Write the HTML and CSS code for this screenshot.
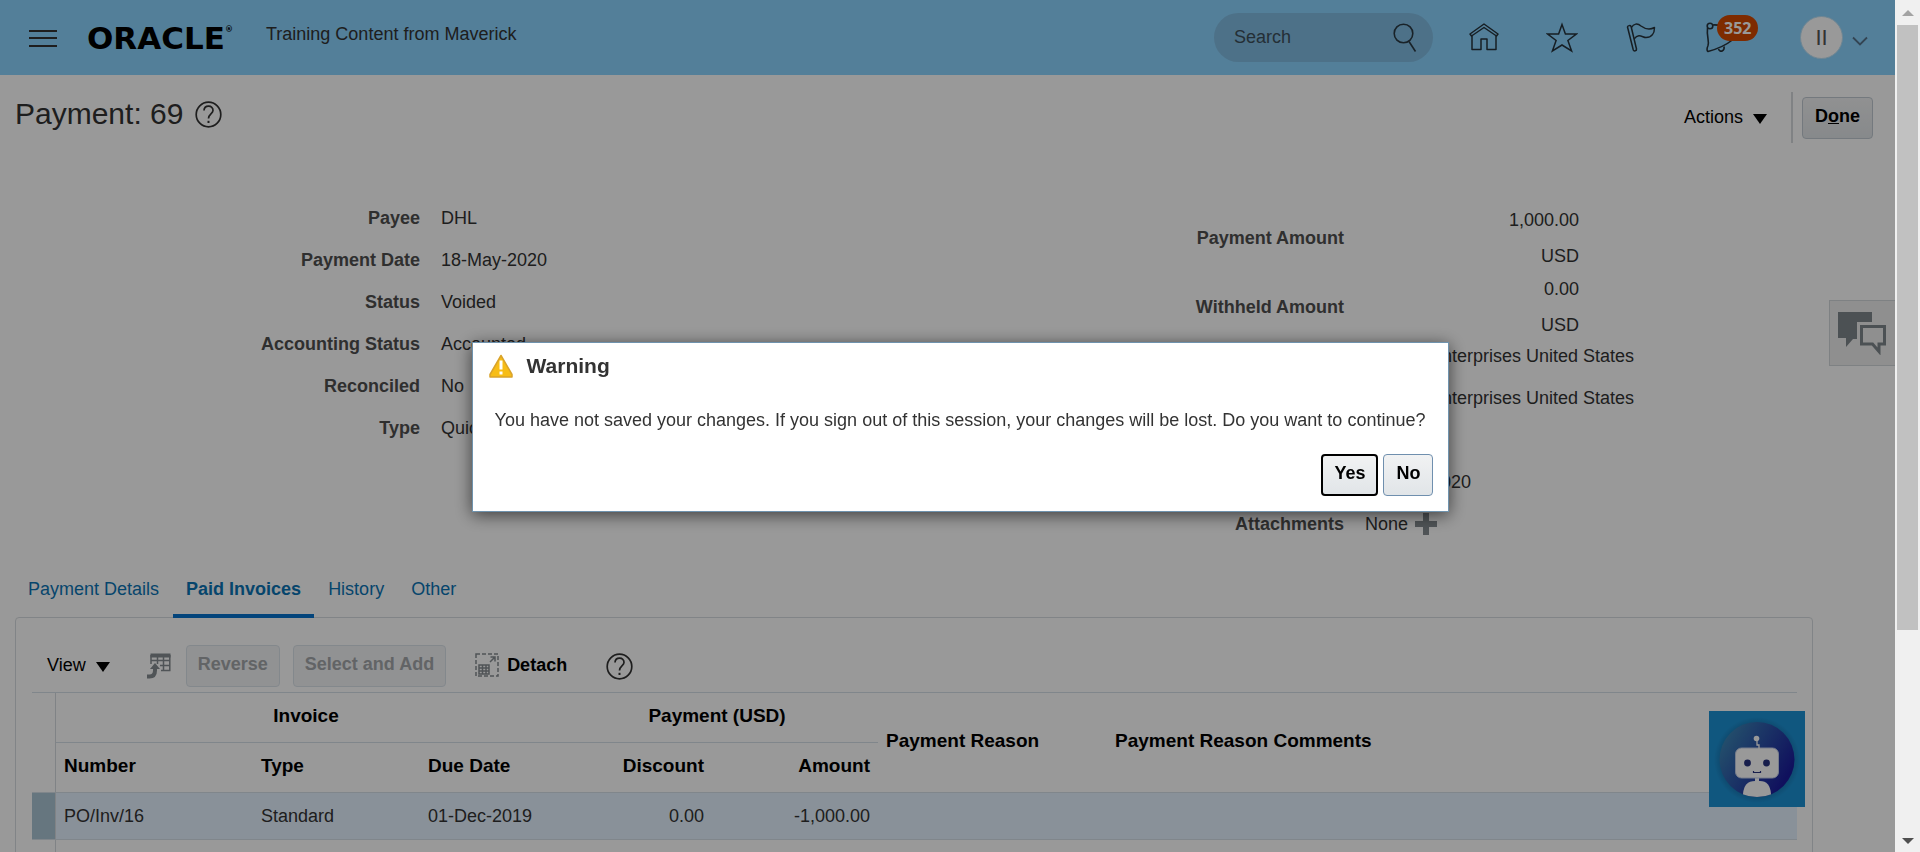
FILE: index.html
```html
<!DOCTYPE html>
<html lang="en">
<head>
<meta charset="utf-8">
<title>Payment: 69</title>
<link rel="stylesheet" href="styles.css">
</head>
<body>
<div class="page">
  <header class="topbar">
    <button class="icon-button" aria-label="Navigator">
      <svg width="28" height="20" viewBox="0 0 28 20" fill="none" stroke="#333" stroke-width="2"><path d="M0 3h28M0 10h28M0 18h28"/></svg>
    </button>
    <a class="logo" href="#">ORACLE<sup class="logo-mark">®</sup></a>
    <span class="tagline">Training Content from Maverick</span>
    <div class="topbar-tools">
      <label class="search">
        <input class="search-input" type="text" placeholder="Search" aria-label="Search">
        <svg width="24" height="30" viewBox="0 0 24 30" fill="none" stroke="#2b3a44" stroke-width="1.6"><circle cx="10.500" cy="10.500" r="9.300"/><path d="M16 18.500L22.500 28.500"/></svg>
      </label>
      <a class="tool tool-home" href="#" aria-label="Home">
        <svg width="30" height="30" viewBox="0 0 30 30" fill="none" stroke="#26333c" stroke-width="1.5" stroke-linejoin="round"><path d="M1 11L15 1l14 10-1.500 2L15 4.500 2.500 13z"/><path d="M3 13V26.500h9V16h6v10.500h9V13"/></svg>
      </a>
      <a class="tool tool-star" href="#" aria-label="Favorites">
        <svg width="32" height="32" viewBox="0 0 32 32" fill="none" stroke="#26333c" stroke-width="1.5"><path d="M16 2.500l3.400 9.500h11l-8.500 6.500 3.700 10.500L16 23l-9.600 6 3.700-10.500L1.600 12h11z"/></svg>
      </a>
      <a class="tool tool-flag" href="#" aria-label="Watchlist">
        <svg width="30" height="32" viewBox="0 0 30 32" fill="none" stroke="#26333c" stroke-width="1.5" stroke-linejoin="round"><path d="M1.500 5c0-1.500 3-2 3.600-.500L10.500 27c.3 1.800-2.500 2.600-3.200 1z"/><path d="M5.500 5.500c2-4 6-4.500 9.500-1.500 4 3 8 4.500 13.500 1.500 0 6-3 10-8.500 10-3.500 0-7-4.500-11.800 1.200"/></svg>
      </a>
      <a class="tool tool-bell" href="#" aria-label="Notifications, 352 unread">
        <svg width="36" height="34" viewBox="0 0 36 34" fill="none" stroke="#26333c" stroke-width="1.6"><circle cx="5" cy="5" r="2.800"/><path d="M7.500 4c11-1 19 6 20.500 14.500C20 25 14 27.500 3 30.500c-1.500-1-1-3.500 0-6 1.500-4.500-1.500-9-.500-17.500"/><path d="M13.500 28c1.500 4 6.500 2 5.500-2.500"/></svg>
        <span class="badge">352</span>
      </a>
      <button class="user" aria-label="Settings and actions">
        <span class="avatar">II</span>
        <svg class="chevron" width="16" height="10" viewBox="0 0 16 10" fill="none" stroke="#55728a" stroke-width="1.8"><path d="M1 1.500l7 7 7-7"/></svg>
      </button>
    </div>
  </header>

  <div class="title-row">
    <h1 class="title">Payment: 69</h1>
    <button class="icon-button" aria-label="Help">
      <svg width="27" height="27" viewBox="0 0 27 27" fill="none" stroke="#333" stroke-width="1.700"><circle cx="13.500" cy="13.500" r="12.300"/><path d="M9 9.500c.3-6 9.300-5.500 9 0-.2 3.500-4.500 3.500-4.500 8"/><path d="M13.500 19.800v2.200" stroke-width="2"/></svg>
    </button>
    <div class="title-actions">
      <button class="menu-button">Actions <span class="caret"></span></button>
      <span class="divider"></span>
      <button class="button">D<u>o</u>ne</button>
    </div>
  </div>

  <section class="summary">
    <dl class="fields">
      <dt>Payee</dt><dd>DHL</dd>
      <dt>Payment Date</dt><dd>18-May-2020</dd>
      <dt>Status</dt><dd>Voided</dd>
      <dt>Accounting Status</dt><dd>Accounted</dd>
      <dt>Reconciled</dt><dd>No</dd>
      <dt>Type</dt><dd>Quick</dd>
    </dl>
    <div class="right-fields">
      <dl class="fields amounts">
        <dt>Payment Amount</dt><dd><span>1,000.00</span><span>USD</span></dd>
        <dt>Withheld Amount</dt><dd><span>0.00</span><span>USD</span></dd>
      </dl>
      <dl class="fields">
        <dt></dt><dd class="company">Enterprises United States</dd>
        <dt></dt><dd class="company">Enterprises United States</dd>
        <dt></dt><dd class="blank"></dd>
        <dt></dt><dd>18-May-2020</dd>
        <dt>Attachments</dt>
        <dd class="attachments">None
          <button class="icon-button" aria-label="Add attachment"><svg width="22" height="22" viewBox="0 0 22 22" fill="#858c91"><path d="M8 0h6v8h8v6h-8v8H8v-8H0V8h8z"/></svg></button>
        </dd>
      </dl>
    </div>
  </section>

  <nav class="tabs">
    <a class="tab" href="#">Payment Details</a>
    <a class="tab tab-active" href="#">Paid Invoices</a>
    <a class="tab" href="#">History</a>
    <a class="tab" href="#">Other</a>
  </nav>

  <section class="panel">
    <div class="toolbar">
      <button class="menu-button">View <span class="caret"></span></button>
      <button class="icon-button wrap-tool" aria-label="Wrap" disabled>
        <svg width="24" height="26" viewBox="0 0 24 26" fill="none" stroke="#858c91" stroke-width="1.500"><path d="M3.500 2.500h20" stroke-width="4"/><path d="M4 2v9M10.500 4v7M16.500 4v14M22.800 2v16M4 7.500h19M13 12.500h10M14 17.500h9.500"/><path d="M0 23.500h2.500q5.500 0 5.500-6v-3" stroke-width="4"/><path d="M3 16l5-6 5 6z" fill="#858c91" stroke="none"/></svg>
      </button>
      <button class="button" disabled>Reverse</button>
      <button class="button" disabled>Select and Add</button>
      <button class="detach">
        <svg width="24" height="24" viewBox="0 0 24 24" fill="none" stroke="#858c91" stroke-width="1.500"><path d="M1 1h22v22H1z" stroke-dasharray="4 2"/><path d="M4 12h10v9H4zM4 15h10M4 18h10M7.500 12v9M11 12v9" /><path d="M15 9l5-5M15.500 4H20v4.500"/></svg>
        Detach
      </button>
      <button class="icon-button" aria-label="Table help">
        <svg width="27" height="27" viewBox="0 0 27 27" fill="none" stroke="#333" stroke-width="1.700"><circle cx="13.500" cy="13.500" r="12.300"/><path d="M9 9.500c.3-6 9.300-5.500 9 0-.2 3.500-4.500 3.500-4.500 8"/><path d="M13.500 19.800v2.200" stroke-width="2"/></svg>
      </button>
    </div>
    <table class="invoices">
      <colgroup><col class="c-handle"><col class="c-number"><col class="c-type"><col class="c-due"><col class="c-discount"><col class="c-amount"><col class="c-reason"><col></colgroup>
      <thead>
        <tr>
          <td class="handle" rowspan="2"></td>
          <th class="group" colspan="3">Invoice</th>
          <th class="group" colspan="2">Payment (USD)</th>
          <th rowspan="2">Payment Reason</th>
          <th rowspan="2">Payment Reason Comments</th>
        </tr>
        <tr><th>Number</th><th>Type</th><th>Due Date</th><th class="num">Discount</th><th class="num">Amount</th></tr>
      </thead>
      <tbody>
        <tr class="selected"><td class="handle"></td><td>PO/Inv/16</td><td>Standard</td><td>01-Dec-2019</td><td class="num">0.00</td><td class="num">-1,000.00</td><td></td><td></td></tr>
        <tr><td class="handle"></td><td colspan="7"></td></tr>
      </tbody>
    </table>
  </section>
</div>

<button class="chat-tab" aria-label="Conversations">
  <svg width="50" height="44" viewBox="0 0 50 44"><path d="M1 1h34v10H20v17h-4L9 36v-9H1z" fill="#7f878c"/><path d="M24.500 15.500h23v17.500H42v7.500l-6.500-7.500h-11z" fill="none" stroke="#7f878c" stroke-width="3"/></svg>
</button>
<button class="bot" aria-label="Digital assistant">
  <svg width="96" height="96" viewBox="0 0 96 96">
    <defs>
      <linearGradient id="disc" x1="0" y1="0.200" x2="1" y2="0.800"><stop offset="0.050" stop-color="#3b84b4"/><stop offset="0.900" stop-color="#1b1b9c"/></linearGradient>
      <radialGradient id="halo"><stop offset="0.800" stop-color="#1775b0"/><stop offset="1" stop-color="#1c91d4"/></radialGradient>
      <clipPath id="round"><circle cx="48" cy="48.500" r="37.500"/></clipPath>
    </defs>
    <rect width="96" height="96" fill="#1c91d4"/>
    <circle cx="48" cy="49" r="43" fill="url(#halo)"/>
    <circle cx="48" cy="48.500" r="37.500" fill="url(#disc)"/>
    <g clip-path="url(#round)"><path d="M34 90V83q1-13 12-13h5q10 0 11 13v7z" fill="#fff"/></g>
    <rect x="46" y="66" width="4" height="6" fill="#fff"/>
    <rect x="26.500" y="37" width="43" height="30" rx="6" fill="#fff" stroke="#c5cfe8"/>
    <path d="M48 28v6h2v4" fill="none" stroke="#fff" stroke-width="1.300"/>
    <circle cx="47.500" cy="27.500" r="2.800" fill="#fff"/>
    <circle cx="38.500" cy="52" r="3.400" fill="#27327f"/><circle cx="57.500" cy="52" r="3.400" fill="#27327f"/>
    <path d="M44.500 60v1.500h7V60" fill="none" stroke="#27327f" stroke-width="1.200"/>
  </svg>
</button>

<div class="glass"></div>

<div class="scrollbar">
  <span class="scroll-up"></span>
  <span class="scroll-thumb"></span>
  <span class="scroll-down"></span>
</div>

<div class="dialog-layer">
  <div class="dialog" role="alertdialog" aria-labelledby="dialog-title" aria-describedby="dialog-text">
    <div class="dialog-head">
      <svg width="24" height="24" viewBox="0 0 24 24"><path d="M12 1.500L23 20.500V23H1V20.500z" fill="#f7bd16" stroke="#d9a32b" stroke-width="1.500" stroke-linejoin="round"/><path d="M12 6.500v9" stroke="#fff" stroke-width="3"/><path d="M12 17.500v3" stroke="#fff" stroke-width="3"/></svg>
      <h2 class="dialog-title" id="dialog-title">Warning</h2>
    </div>
    <p class="dialog-text" id="dialog-text">You have not saved your changes. If you sign out of this session, your changes will be lost. Do you want to continue?</p>
    <div class="dialog-buttons">
      <button class="button button-focus">Yes</button>
      <button class="button button-dialog">No</button>
    </div>
  </div>
</div>
</body>
</html>
```
FILE: styles.css
```css
* { box-sizing: border-box; }

body {
  margin: 0;
  height: 100vh;
  overflow: hidden;
  font: 18px/24px "Liberation Sans", Arial, sans-serif;
  color: #333;
  background: #fff;
}

button { font: inherit; color: inherit; cursor: pointer; }
svg { display: block; flex: none; }

.page { padding-right: 25px; }

.icon-button {
  padding: 0;
  border: 0;
  background: none;
}

/* Top bar */
.topbar {
  display: flex;
  align-items: center;
  height: 75px;
  padding: 0 27px 0 29px;
  background: #8bd4ff;
}
.logo {
  display: flex;
  width: 179px;
  margin-left: 30px;
  color: #000;
  font: bold 31px/36px "DejaVu Sans", sans-serif;
  text-decoration: none;
}
.logo-mark { font-size: 8px; line-height: 20px; }
.tagline { padding-bottom: 8px; }

.topbar-tools {
  display: flex;
  align-items: center;
  margin-left: auto;
}
.search {
  display: flex;
  align-items: center;
  width: 219px;
  height: 49px;
  padding: 0 16px 0 20px;
  border-radius: 25px;
  background: #81bde3;
}
.search-input {
  flex: 1;
  min-width: 0;
  padding: 0 0 2px;
  border: 0;
  outline: 0;
  background: none;
  font: inherit;
}
.search-input::placeholder { color: #3d4f5b; opacity: 1; }
.tool { position: relative; }
.tool-home { margin-left: 36px; }
.tool-star { margin-left: 47px; }
.tool-flag { margin-left: 48px; }
.tool-bell { margin-left: 49px; }
.badge {
  position: absolute;
  left: 12px;
  top: -6px;
  padding: 0 7px;
  border-radius: 13px;
  background: #d24800;
  color: #fff;
  font: bold 16px/26px "Open Sans", sans-serif;
}
.user {
  display: flex;
  align-items: center;
  gap: 9px;
  margin-left: 59px;
  padding: 0;
  border: 0;
  background: none;
}
.avatar {
  width: 43px;
  height: 43px;
  border: 1px solid #b9dff5;
  border-radius: 50%;
  background: #fff;
  color: #555;
  font-size: 22px;
  line-height: 41px;
  text-align: center;
}
.chevron { margin-top: 6px; }

/* Title row */
.title-row {
  display: flex;
  align-items: center;
  gap: 12px;
  height: 78px;
  padding: 0 22px 0 15px;
}
.title {
  margin: 0;
  font-size: 30px;
  font-weight: normal;
  line-height: 36px;
}
.title-actions {
  display: flex;
  align-items: center;
  gap: 9px;
  margin: 7px 0 0 auto;
}
.divider {
  width: 2px;
  height: 51px;
  margin-left: 15px;
  background: #d5d9dd;
}
.menu-button {
  display: flex;
  align-items: center;
  gap: 10px;
  padding: 0 0 2px;
  border: 0;
  background: none;
  color: #000;
}
.caret {
  margin-top: 4px;
  border: 7px solid transparent;
  border-top: 10px solid #000;
  border-bottom: 0;
}
.button {
  height: 42px;
  padding: 0 12px 4px;
  border: 1px solid #c1cad2;
  border-radius: 4px;
  background: linear-gradient(#f1f2f3, #e1e5e8);
  color: #000;
  font-weight: bold;
}
.button:disabled {
  padding: 0 11px 4px;
  border-color: #dbe3ea;
  background: #f2f4f6;
  color: #a4a7aa;
}

/* Summary fields */
.summary {
  display: grid;
  grid-template-columns: 1fr 1fr;
  padding: 53px 47px 41px 0;
}
.fields {
  display: grid;
  grid-template-columns: 5fr 6fr;
  align-content: start;
  row-gap: 18px;
  margin: 0;
}
.fields dt {
  align-self: center;
  color: #4f4f4f;
  font-weight: bold;
  text-align: right;
}
.fields dd { margin: 0 0 0 21px; }
.right-fields { padding-top: 2px; }
.amounts {
  row-gap: 9px;
  margin-bottom: 7px;
}
.amounts dd {
  display: grid;
  width: 214px;
  gap: 12px;
  text-align: right;
}
.fields .company { width: 269px; text-align: right; }
.fields .blank { height: 24px; }
.attachments { display: flex; align-items: center; gap: 7px; }

/* Tabs */
.tabs {
  position: relative;
  z-index: 1;
  display: flex;
  gap: 1px;
  padding-left: 15px;
}
.tab {
  padding: 0 13px 13px;
  border-bottom: 4px solid transparent;
  color: #0b74b5;
  text-decoration: none;
}
.tab-active {
  border-color: #0572ce;
  font-weight: bold;
}

/* Invoice panel */
.panel {
  margin: -1px 82px 0 15px;
  padding: 27px 15px 0 16px;
  border: 1px solid #d8dde1;
  border-radius: 4px;
}
.toolbar {
  display: flex;
  align-items: center;
  gap: 13px;
  padding: 0 0 5px 15px;
}
.wrap-tool { margin: 0 2px 0 24px; }
.detach {
  display: flex;
  align-items: center;
  gap: 8px;
  margin: 0 26px 0 16px;
  padding: 0 0 2px;
  border: 0;
  background: none;
  color: #000;
  font-weight: bold;
}
.invoices {
  width: 100%;
  table-layout: fixed;
  border-top: 1px solid #d6e0e8;
  border-spacing: 0;
}
.c-handle { width: 24px; }
.c-number { width: 197px; }
.c-type { width: 167px; }
.c-due { width: 136px; }
.c-discount { width: 156px; }
.c-amount { width: 166px; }
.c-reason { width: 229px; }
.invoices th,
.invoices td {
  height: 50px;
  padding: 0 8px;
  border-bottom: 1px solid #d6e0e8;
  text-align: left;
}
.invoices th {
  padding: 0 8px 3px;
  color: #000;
  font-size: 19px;
}
.invoices tbody td { height: 47px; }
.invoices .group { text-align: center; }
.invoices .num { text-align: right; }
.invoices .handle {
  padding: 0;
  border-right: 1px solid #d6dbdf;
}
.selected td { background: #e4f2ff; }
.selected .handle { background: #abc5d4; }

/* Floating controls */
.chat-tab {
  position: fixed;
  top: 300px;
  right: 25px;
  width: 66px;
  height: 66px;
  padding: 0 7px;
  border: 1px solid #d3d8db;
  border-right: 0;
  background: #eee;
}
.bot {
  position: fixed;
  right: 115px;
  bottom: 45px;
  padding: 0;
  border: 0;
}

/* Modal layer */
.glass {
  position: fixed;
  z-index: 2;
  inset: 0 25px 0 0;
  background: rgba(0, 0, 0, 0.4);
}
.dialog-layer {
  position: fixed;
  z-index: 3;
  inset: 0;
  display: grid;
  place-items: center;
}
.dialog {
  margin: 1px 0 0 1px;
  padding: 11px 15px 15px 16px;
  border: 1px solid #6f93ae;
  background: #fff;
  box-shadow: 0 3px 16px rgba(0, 0, 0, 0.6);
}
.dialog-head {
  display: flex;
  align-items: center;
  gap: 14px;
}
.dialog-title {
  margin: 0;
  font-size: 21px;
  line-height: 24px;
}
.dialog-text { margin: 30px 8px 22px 6px; }
.dialog-buttons {
  display: flex;
  justify-content: flex-end;
  gap: 5px;
}
.button-focus {
  padding: 0 11px 4px;
  border: 2px solid #000;
}
.button-dialog { border-color: #6f8fae; }

/* Scrollbar */
.scrollbar {
  position: fixed;
  z-index: 2;
  inset: 0 0 0 auto;
  display: flex;
  flex-direction: column;
  align-items: center;
  width: 25px;
  padding: 10px 0 8px;
  background: #f0f0f0;
}
.scroll-up,
.scroll-down {
  border: 6px solid transparent;
}
.scroll-up { border-top: 0; border-bottom-color: #a3a3a3; }
.scroll-down { margin-top: auto; border-bottom: 0; border-top-color: #505050; }
.scroll-thumb {
  width: 21px;
  height: 71vh;
  margin-top: 9px;
  background: #c1c1c1;
}
```
